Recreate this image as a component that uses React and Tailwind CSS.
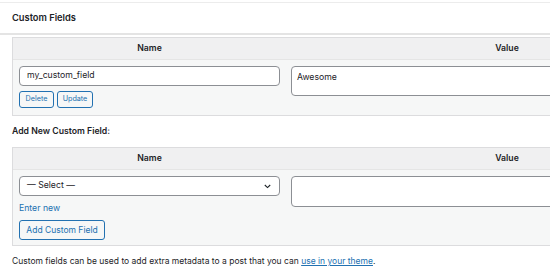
import React from "react";

function CellInput({ children, className }) {
  return (
    <div
      className={`border border-[#8c8f94] rounded-[4px] bg-white text-[8.7px] text-[#1d2327] ${className}`}
    >
      {children}
    </div>
  );
}

function FieldTable({ children, bodyHeight }) {
  return (
    <div className="w-[717px] border border-[#dcdcde] bg-[#f6f7f7]">
      <div className="flex h-[22px] bg-[#f0f0f1] border-b border-[#e5e5e5] text-[8.7px] font-semibold text-[#1d2327]">
        <div className="w-[273px] flex items-center justify-center">Name</div>
        <div className="flex-1 flex items-center justify-center">Value</div>
      </div>
      <div className={`flex ${bodyHeight}`}>{children}</div>
    </div>
  );
}

export default function App() {
  return (
    <div
      className="w-[550px] h-[266px] overflow-hidden bg-white text-[#1d2327]"
      style={{ fontFamily: "Inter, 'Liberation Sans', sans-serif" }}
    >
      <div className="h-[3px] border-b border-[#ececec]" />
      <div className="h-[32px] flex items-center px-3 text-[9.3px] font-semibold border-b-2 border-[#e4e4e4]">
        Custom Fields
      </div>
      <div className="px-3 pt-[2px]">
        <FieldTable bodyHeight="h-[55px]">
          <div className="w-[273px] pl-[6px] pt-[6px]">
            <CellInput className="w-[261px] h-[20px] flex items-center pl-[7px]">
              my_custom_field
            </CellInput>
            <div className="flex gap-[3px] mt-[5px]">
              <button className="w-[35px] h-[17px] border border-[#2271b1] rounded-[3px] text-[7.2px] text-[#2271b1] bg-[#f6f7f7] flex items-center justify-center">
                Delete
              </button>
              <button className="w-[36px] h-[17px] border border-[#2271b1] rounded-[3px] text-[7.2px] text-[#2271b1] bg-[#f6f7f7] flex items-center justify-center">
                Update
              </button>
            </div>
          </div>
          <div className="flex-1 pl-[5px] pt-[6px]">
            <CellInput className="w-[430px] h-[30px] pl-[5px] pt-[4px]">
              Awesome
            </CellInput>
          </div>
        </FieldTable>

        <div className="h-[31px] flex items-center text-[8.7px] font-semibold">
          Add New Custom Field:
        </div>

        <FieldTable bodyHeight="h-[75px]">
          <div className="w-[273px] pl-[6px] pt-[6px]">
            <CellInput className="w-[261px] h-[20px] flex items-center justify-between pl-[7px] pr-[8px]">
              <span>— Select —</span>
              <svg width="7" height="5" viewBox="0 0 7 5" fill="none">
                <path d="M0.8 1l2.7 2.6L6.2 1" stroke="#1d2327" strokeWidth="1.1" />
              </svg>
            </CellInput>
            <div className="mt-[5px] text-[8.7px] text-[#2271b1] leading-[14px]">
              Enter new
            </div>
            <button className="mt-[5px] w-[86px] h-[20px] border border-[#2271b1] rounded-[3px] text-[8.5px] text-[#2271b1] bg-[#f6f7f7] flex items-center justify-center">
              Add Custom Field
            </button>
          </div>
          <div className="flex-1 pl-[5px] pt-[6px]">
            <CellInput className="w-[430px] h-[31px]" />
          </div>
        </FieldTable>

        <div className="mt-[8px] text-[8.5px] leading-[14px] text-[#1d2327] whitespace-nowrap">
          Custom fields can be used to add extra metadata to a post that you can{" "}
          <a className="text-[#2271b1] underline">use in your theme</a>.
        </div>
      </div>
    </div>
  );
}
